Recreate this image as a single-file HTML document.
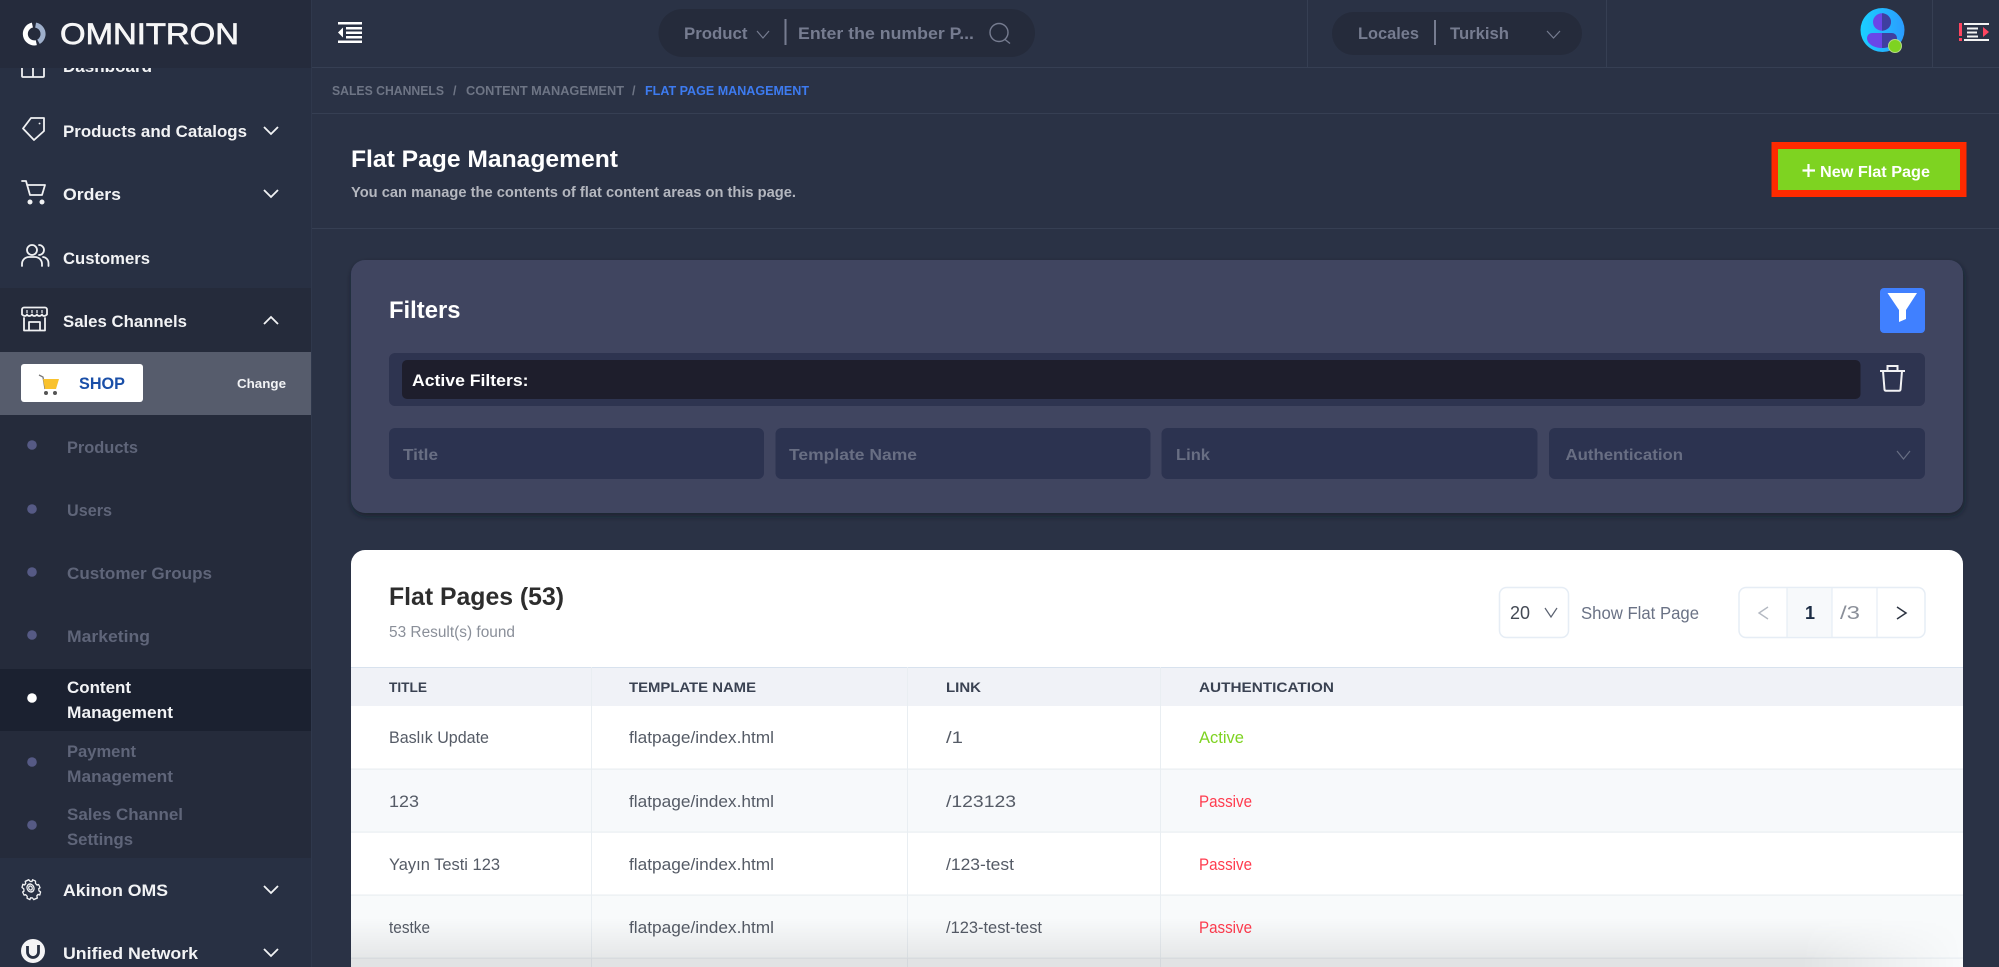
<!DOCTYPE html>
<html lang="en">
<head>
<meta charset="utf-8">
<title>Flat Page Management</title>
<style>
html,body{margin:0;padding:0;width:1999px;height:967px;overflow:hidden;background:#2a3245}
svg{display:block}
text{font-family:"Liberation Sans",Arial,sans-serif;white-space:pre}
.b{font-weight:700}
.side{font-size:17px;font-weight:700;fill:#f2f3f5}
.sub{font-size:17px;font-weight:700;fill:#5f6579}
.bar{font-size:16.5px;font-weight:700;fill:#767c90}
.crumb{font-size:12.5px;font-weight:700;fill:#6e7585}
.ph{font-size:16px;font-weight:700;fill:#686e83}
.th{font-size:14px;font-weight:700;fill:#3a4252}
.td{font-size:17px;fill:#555b66}
.ch{fill:none;stroke:#f2f3f5;stroke-width:1.8}
.ic{fill:none;stroke:#f0f1f3;stroke-width:1.8;stroke-linejoin:round;stroke-linecap:round}
.gch{fill:none;stroke:#767c90;stroke-width:1.2}
</style>
</head>
<body>
<svg xmlns="http://www.w3.org/2000/svg" width="1999" height="967" viewBox="0 0 1999 967">
<defs>
<linearGradient id="fadeV" x1="0" y1="0" x2="0" y2="1">
<stop offset="0" stop-color="#000" stop-opacity="0"/>
<stop offset="1" stop-color="#000" stop-opacity=".075"/>
</linearGradient>
<linearGradient id="fadeH" x1="0" y1="0" x2="1" y2="0">
<stop offset="0" stop-color="#fff"/>
<stop offset=".9" stop-color="#fff"/>
<stop offset="1" stop-color="#000"/>
</linearGradient>
<mask id="m" maskUnits="userSpaceOnUse" x="351" y="900" width="1612" height="67">
<rect x="351" y="900" width="1612" height="67" fill="url(#fadeH)"/>
</mask>
<linearGradient id="av" x1="0" y1="0" x2="1" y2="0">
<stop offset="0" stop-color="#1ad0ff"/>
<stop offset="1" stop-color="#2b9cff"/>
</linearGradient>
<filter id="sh" x="-2%" y="-5%" width="104%" height="112%">
<feDropShadow dx="1" dy="3" stdDeviation="3" flood-color="#151a28" flood-opacity=".65"/>
</filter>
</defs>

<!-- base -->
<rect width="1999" height="967" fill="#2a3245"/>
<rect width="311" height="967" fill="#283043"/>
<rect x="311" width="1" height="967" fill="#2f384c"/>

<!-- sidebar -->
<text x="63" y="72" class="side" textLength="89" lengthAdjust="spacingAndGlyphs">Dashboard</text>
<path class="ic" d="M22 66v10a1 1 0 0 0 1 1h20a1 1 0 0 0 1-1V66M33 66v11"/>

<path class="ic" d="M31 118h13v13l-10 9-11-11.500zM39.500 123.500h.1"/>
<text x="63" y="137" class="side" textLength="184" lengthAdjust="spacingAndGlyphs">Products and Catalogs</text>
<path class="ch" d="M264 127l7 7 7-7"/>

<path class="ic" d="M22 181h4l4 14h12l3-10H27"/>
<circle cx="30" cy="202" r="2.500" fill="#f0f1f3"/><circle cx="42" cy="202" r="2.500" fill="#f0f1f3"/>
<text x="63" y="200" class="side" textLength="58" lengthAdjust="spacingAndGlyphs">Orders</text>
<path class="ch" d="M264 190l7 7 7-7"/>

<circle class="ic" cx="32" cy="250" r="5"/>
<path class="ic" d="M22 266v-2a7 7 0 0 1 7-7h6a7 7 0 0 1 7 7v2M39 245a5 5 0 0 1 0 10M43 257a6 6 0 0 1 5.500 6v3"/>
<text x="63" y="264" class="side" textLength="87" lengthAdjust="spacingAndGlyphs">Customers</text>

<rect y="288" width="311" height="64" fill="#252b3b"/>
<path class="ic" d="M24 307.500h21a2 2 0 0 1 2 2v5c-2 2-4 2-5 0-1.500 2-4 2-5 0-1.500 2-4 2-5 0-1.500 2-4 2-5 0-1 2-3 2-5 0v-5a2 2 0 0 1 2-2zM24 318v12.500h21V318M29 330v-8h11v8"/>
<path d="M27 310v3M32 310v3M37 310v3M42 310v3" stroke="#f0f1f3" stroke-width="1.200" fill="none"/>
<text x="63" y="327" class="side" textLength="124" lengthAdjust="spacingAndGlyphs">Sales Channels</text>
<path class="ch" d="M264 324l7-7 7 7"/>

<rect y="352" width="311" height="63" fill="#565c6c"/>
<rect x="21" y="364" width="122" height="38" rx="3" fill="#fff"/>
<path d="M39 375l4 2 2 12" fill="none" stroke="#777" stroke-width="1.300"/>
<path d="M43 379h16l-3 10H45z" fill="#f9c22e"/>
<circle cx="46" cy="393" r="2" fill="#555"/><circle cx="55" cy="393" r="2" fill="#555"/>
<text x="79" y="389" class="b" font-size="17" fill="#1a4fa8" textLength="46" lengthAdjust="spacingAndGlyphs">SHOP</text>
<text x="237" y="388" class="b" font-size="13" fill="#f2f3f5" textLength="49" lengthAdjust="spacingAndGlyphs">Change</text>

<rect y="415" width="311" height="443" fill="#252b3b"/>
<rect y="669" width="311" height="62" fill="#1b2130"/>
<g fill="#565a85">
<circle cx="32" cy="445" r="4.800"/><circle cx="32" cy="509" r="4.800"/><circle cx="32" cy="572" r="4.800"/><circle cx="32" cy="635" r="4.800"/><circle cx="32" cy="762" r="4.800"/><circle cx="32" cy="825" r="4.800"/>
</g>
<circle cx="32" cy="698" r="4.800" fill="#fff"/>
<text x="67" y="453" class="sub" textLength="71" lengthAdjust="spacingAndGlyphs">Products</text>
<text x="67" y="516" class="sub" textLength="45" lengthAdjust="spacingAndGlyphs">Users</text>
<text x="67" y="579" class="sub" textLength="145" lengthAdjust="spacingAndGlyphs">Customer Groups</text>
<text x="67" y="642" class="sub" textLength="83" lengthAdjust="spacingAndGlyphs">Marketing</text>
<text x="67" y="693" class="side" textLength="64" lengthAdjust="spacingAndGlyphs">Content</text>
<text x="67" y="718" class="side" textLength="106" lengthAdjust="spacingAndGlyphs">Management</text>
<text x="67" y="757" class="sub" textLength="69" lengthAdjust="spacingAndGlyphs">Payment</text>
<text x="67" y="782" class="sub" textLength="106" lengthAdjust="spacingAndGlyphs">Management</text>
<text x="67" y="820" class="sub" textLength="116" lengthAdjust="spacingAndGlyphs">Sales Channel</text>
<text x="67" y="845" class="sub" textLength="66" lengthAdjust="spacingAndGlyphs">Settings</text>

<g transform="translate(30.500 888) rotate(-25) scale(.68 .82) translate(-31 -888)" fill="none" stroke="#f0f1f3" stroke-width="1.800" stroke-linejoin="round">
<circle cx="31" cy="888" r="2.500"/><circle cx="31" cy="888" r="5"/>
<path d="M28 878h6l.5 2.500 2.500 1 2-1.500 3 3-1.500 2.500 1 2.500 2.500.5v4l-2.500.5-1 2.500 1.500 2-3 3-2-1.500-2.500 1-.5 2.500h-6l-.5-2.500-2.500-1-2 1.500-3-3 1.500-2-1-2.500-2.500-.5v-4l2.500-.5 1-2.500-1.500-2.500 3-3 2 1.500 2.500-1z"/>
</g>
<text x="63" y="896" class="side" textLength="105" lengthAdjust="spacingAndGlyphs">Akinon OMS</text>
<path class="ch" d="M264 886l7 7 7-7"/>

<circle cx="33" cy="951" r="12" fill="#f4f4f6"/>
<path d="M27.500 946v6a5.500 5.500 0 0 0 11 0v-7" fill="none" stroke="#283043" stroke-width="2.800"/>
<text x="63" y="959" class="side" textLength="135" lengthAdjust="spacingAndGlyphs">Unified Network</text>
<path class="ch" d="M264 949l7 7 7-7"/>

<!-- logo area -->
<rect width="311" height="68" fill="#252b3c"/>
<path d="M36.300 42.700A9 9 0 1 1 32.400 25.100" fill="none" stroke="#fff" stroke-width="5"/>
<path d="M35.600 25.100A9 9 0 0 1 38.500 41.800" fill="none" stroke="#9fb0cc" stroke-width="5"/>
<text x="60" y="44" font-size="30" fill="#f6f6f7" stroke="#f6f6f7" stroke-width=".7" textLength="179" lengthAdjust="spacingAndGlyphs">OMNITRON</text>

<!-- top bar -->
<rect x="312" y="67" width="1687" height="1" fill="#363f53"/>
<rect x="312" y="113" width="1687" height="1" fill="#363f53"/>
<rect x="312" y="228" width="1687" height="1" fill="#363f53"/>
<rect x="1307" y="0" width="1" height="67" fill="#363f53"/>
<rect x="1606" y="0" width="1" height="67" fill="#363f53"/>
<rect x="1932" y="0" width="1" height="67" fill="#363f53"/>

<g fill="#fff">
<rect x="338" y="22" width="24" height="2.500"/>
<rect x="338" y="40.500" width="24" height="2.500"/>
<rect x="346" y="27" width="16" height="2.500"/>
<rect x="346" y="31.500" width="16" height="2.500"/>
<rect x="346" y="36" width="16" height="2.500"/>
<path d="M338 32.500l5-5v10z"/>
</g>

<rect x="658.500" y="9" width="376.500" height="48" rx="24" fill="#252b3b"/>
<text x="684" y="39" class="bar" textLength="63.500" lengthAdjust="spacingAndGlyphs">Product</text>
<path class="gch" d="M757 31l6 7 6-7"/>
<rect x="784.500" y="19" width="2" height="26" fill="#767c90"/>
<text x="798" y="39" class="bar" textLength="176" lengthAdjust="spacingAndGlyphs">Enter the number P...</text>
<circle cx="999" cy="32.500" r="9" fill="none" stroke="#767c90" stroke-width="1.400"/>
<path d="M1005 39.500l5 4" stroke="#767c90" stroke-width="1.400" fill="none"/>

<rect x="1332" y="12" width="250" height="43" rx="21.500" fill="#252b3b"/>
<text x="1358" y="39" class="bar" textLength="61" lengthAdjust="spacingAndGlyphs">Locales</text>
<rect x="1434" y="20" width="2" height="25" fill="#767c90"/>
<text x="1450" y="39" class="bar" textLength="59" lengthAdjust="spacingAndGlyphs">Turkish</text>
<path class="gch" d="M1547 31l6.500 7 6.500-7"/>

<circle cx="1882.500" cy="30" r="22" fill="url(#av)"/>
<ellipse cx="1882" cy="22" rx="9" ry="8.700" fill="#6a46e8"/>
<path d="M1882 13.300a9 8.700 0 0 1 0 17.400z" fill="#3f3fa0"/>
<path d="M1882 33h-10a5 5 0 0 0-5 5c0 6 7 10 15 10z" fill="#6a46e8"/>
<path d="M1882 33h10a5 5 0 0 1 5 5c0 6-7 10-15 10z" fill="#3f3fa0"/>
<circle cx="1895" cy="46" r="6.500" fill="#7ed321" stroke="#b6d98a" stroke-width="1"/>

<g>
<rect x="1959" y="23" width="3" height="13" fill="#ff4560"/>
<rect x="1959" y="38" width="3" height="3" fill="#ff4560"/>
<g fill="#f3f3f3">
<rect x="1964" y="23" width="25" height="2"/>
<rect x="1964" y="39" width="25" height="2"/>
<rect x="1967" y="27.500" width="11" height="2"/>
<rect x="1967" y="31.500" width="10" height="2"/>
<rect x="1967" y="35.500" width="11" height="2"/>
</g>
<path d="M1983 27l6 5-6 5z" fill="#ff4560"/>
</g>

<!-- breadcrumbs -->
<text x="332" y="95" class="crumb" textLength="112" lengthAdjust="spacingAndGlyphs">SALES CHANNELS</text>
<text x="453" y="95" class="crumb">/</text>
<text x="466" y="95" class="crumb" textLength="158" lengthAdjust="spacingAndGlyphs">CONTENT MANAGEMENT</text>
<text x="632" y="95" class="crumb">/</text>
<text x="645" y="95" class="crumb" style="fill:#3d7bf0" textLength="164" lengthAdjust="spacingAndGlyphs">FLAT PAGE MANAGEMENT</text>

<!-- page title -->
<text x="351" y="167" class="b" font-size="24" fill="#fff" textLength="267" lengthAdjust="spacingAndGlyphs">Flat Page Management</text>
<text x="351" y="197" class="b" font-size="15" fill="#b4b7bf" textLength="445" lengthAdjust="spacingAndGlyphs">You can manage the contents of flat content areas on this page.</text>

<rect x="1771.500" y="142" width="195" height="55" fill="#ff2a00"/>
<rect x="1778" y="149" width="182" height="41" fill="#7ed321"/>
<path d="M1808.500 164v13M1802.500 170.500h12.500" stroke="#fff" stroke-width="2.200" fill="none"/>
<text x="1820" y="177" class="b" font-size="15.500" fill="#fff" textLength="110" lengthAdjust="spacingAndGlyphs">New Flat Page</text>

<!-- filters -->
<rect x="351" y="260" width="1612" height="253" rx="14" fill="#3f4560" filter="url(#sh)"/>
<text x="389" y="318" class="b" font-size="24" fill="#fff" textLength="71.500" lengthAdjust="spacingAndGlyphs">Filters</text>
<rect x="1880" y="288" width="45" height="45" rx="4" fill="#4080ff"/>
<path d="M1887.500 293H1917L1906 310V319L1899 322V310Z" fill="#fff"/>
<rect x="389" y="353" width="1536" height="53" rx="6" fill="#2e3450"/>
<rect x="402" y="360" width="1458.500" height="39" rx="5" fill="#1e1e2c"/>
<text x="412" y="386" class="b" font-size="17" fill="#fff" textLength="116.500" lengthAdjust="spacingAndGlyphs">Active Filters:</text>
<path d="M1880 371h25M1887.500 370.500v-4.500h10v4.500M1883 371l1.500 18.500a1.500 1.500 0 0 0 1.500 1.200h13a1.500 1.500 0 0 0 1.500-1.200l1.500-18.500" fill="none" stroke="#f2f2f4" stroke-width="2"/>
<g fill="#2c3350">
<rect x="389" y="428" width="375" height="51" rx="6"/>
<rect x="775.500" y="428" width="375" height="51" rx="6"/>
<rect x="1161.500" y="428" width="376" height="51" rx="6"/>
<rect x="1549" y="428" width="376" height="51" rx="6"/>
</g>
<text x="403" y="460" class="ph" textLength="35" lengthAdjust="spacingAndGlyphs">Title</text>
<text x="789" y="460" class="ph" textLength="128" lengthAdjust="spacingAndGlyphs">Template Name</text>
<text x="1176" y="460" class="ph" textLength="34" lengthAdjust="spacingAndGlyphs">Link</text>
<text x="1565.500" y="460" class="ph" textLength="117.500" lengthAdjust="spacingAndGlyphs">Authentication</text>
<path d="M1897 451l6.500 8 6.500-8" fill="none" stroke="#686e83" stroke-width="1.200"/>

<!-- table card -->
<path d="M365 550h1584a14 14 0 0 1 14 14v403H351V564a14 14 0 0 1 14-14z" fill="#fff"/>
<text x="389" y="605" class="b" font-size="25" fill="#2d2d2d" textLength="175" lengthAdjust="spacingAndGlyphs">Flat Pages (53)</text>
<text x="389" y="637" font-size="15.500" fill="#8a8f99" textLength="126" lengthAdjust="spacingAndGlyphs">53 Result(s) found</text>

<rect x="1499.500" y="587.500" width="69" height="50" rx="7" fill="#fff" stroke="#e6edf5" stroke-width="1.500"/>
<text x="1510" y="619" font-size="18" fill="#444a55" textLength="20" lengthAdjust="spacingAndGlyphs">20</text>
<path d="M1545 608l6 9 6-9" fill="none" stroke="#5a6170" stroke-width="1.200"/>
<text x="1581" y="619" font-size="17.500" fill="#6a7285" textLength="118" lengthAdjust="spacingAndGlyphs">Show Flat Page</text>

<rect x="1739" y="587.500" width="186" height="50" rx="7" fill="#fff" stroke="#e6edf5" stroke-width="1.500"/>
<rect x="1787" y="588.500" width="45" height="48" fill="#f7f9fb"/>
<path d="M1787 588v49M1832 588v49M1877 588v49" stroke="#e6edf5" stroke-width="1.200" fill="none"/>
<path d="M1768 607l-9 6 9 6" fill="none" stroke="#b4b9c2" stroke-width="1.400"/>
<text x="1810" y="619" class="b" font-size="18" fill="#1c2c44" text-anchor="middle">1</text>
<text x="1840" y="619" font-size="18" fill="#8a8f99" textLength="20" lengthAdjust="spacingAndGlyphs">/3</text>
<path d="M1897 607l9 6-9 6" fill="none" stroke="#2d3442" stroke-width="1.500"/>

<!-- table -->
<rect x="351" y="667" width="1612" height="39" fill="#f0f2f7"/>
<rect x="351" y="667" width="1612" height="1" fill="#d8e2ee"/>
<rect x="351" y="769" width="1612" height="63" fill="#f7f9fb"/>
<rect x="351" y="895" width="1612" height="72" fill="#f8fafb"/>
<g fill="#e9eef2">
<rect x="351" y="768.500" width="1612" height="1.200"/>
<rect x="351" y="831.500" width="1612" height="1.200"/>
<rect x="351" y="894.500" width="1612" height="1.200"/>
<rect x="351" y="957.500" width="1612" height="1.200"/>
<rect x="591" y="667" width="1" height="300"/>
<rect x="907" y="667" width="1" height="300"/>
<rect x="1160" y="667" width="1" height="300"/>
</g>
<text x="389" y="692" class="th" textLength="38" lengthAdjust="spacingAndGlyphs">TITLE</text>
<text x="629" y="692" class="th" textLength="127" lengthAdjust="spacingAndGlyphs">TEMPLATE NAME</text>
<text x="946" y="692" class="th" textLength="35" lengthAdjust="spacingAndGlyphs">LINK</text>
<text x="1199" y="692" class="th" textLength="135" lengthAdjust="spacingAndGlyphs">AUTHENTICATION</text>

<text x="389" y="743" class="td" textLength="100" lengthAdjust="spacingAndGlyphs">Baslık Update</text>
<text x="629" y="743" class="td" textLength="145" lengthAdjust="spacingAndGlyphs">flatpage/index.html</text>
<text x="946" y="743" class="td" textLength="17" lengthAdjust="spacingAndGlyphs">/1</text>
<text x="1199" y="743" font-size="17" fill="#7ed321" textLength="45" lengthAdjust="spacingAndGlyphs">Active</text>

<text x="389" y="807" class="td" textLength="30" lengthAdjust="spacingAndGlyphs">123</text>
<text x="629" y="807" class="td" textLength="145" lengthAdjust="spacingAndGlyphs">flatpage/index.html</text>
<text x="946" y="807" class="td" textLength="70" lengthAdjust="spacingAndGlyphs">/123123</text>
<text x="1199" y="807" font-size="17" fill="#ff3b4e" textLength="53" lengthAdjust="spacingAndGlyphs">Passive</text>

<text x="389" y="870" class="td" textLength="111" lengthAdjust="spacingAndGlyphs">Yayın Testi 123</text>
<text x="629" y="870" class="td" textLength="145" lengthAdjust="spacingAndGlyphs">flatpage/index.html</text>
<text x="946" y="870" class="td" textLength="68" lengthAdjust="spacingAndGlyphs">/123-test</text>
<text x="1199" y="870" font-size="17" fill="#ff3b4e" textLength="53" lengthAdjust="spacingAndGlyphs">Passive</text>

<text x="389" y="933" class="td" textLength="41" lengthAdjust="spacingAndGlyphs">testke</text>
<text x="629" y="933" class="td" textLength="145" lengthAdjust="spacingAndGlyphs">flatpage/index.html</text>
<text x="946" y="933" class="td" textLength="96" lengthAdjust="spacingAndGlyphs">/123-test-test</text>
<text x="1199" y="933" font-size="17" fill="#ff3b4e" textLength="53" lengthAdjust="spacingAndGlyphs">Passive</text>

<!-- bottom fade -->
<g mask="url(#m)">
<rect x="351" y="918" width="1612" height="40" fill="url(#fadeV)"/>
<rect x="351" y="958" width="1612" height="9" fill="#000" fill-opacity=".09"/>
</g>
</svg>
</body>
</html>
